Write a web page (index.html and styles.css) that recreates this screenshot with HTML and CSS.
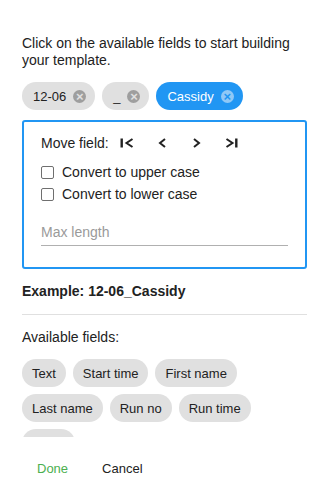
FILE: index.html
```html
<!DOCTYPE html>
<html lang="en">
<head>
    <meta charset="UTF-8">
    <meta name="viewport" content="width=device-width, initial-scale=1.0">
    <title>Template builder</title>
    <link rel="stylesheet" href="styles.css">
</head>
<body>
    <div class="dialog">
        <p class="intro">Click on the available fields to start building your template.</p>

        <div class="chips selected">
            <span class="chip">12-06 <span class="remove">&times;</span></span>
            <span class="chip">_ <span class="remove">&times;</span></span>
            <span class="chip active">Cassidy <span class="remove">&times;</span></span>
        </div>

        <div class="editor">
            <div class="move-row">
                <span>Move field:</span>
                <div class="move-buttons">
                    <button type="button" class="icon-btn" title="First">
                        <svg width="14" height="10" viewBox="0 0 14 10"><rect x="0.5" y="0.5" width="2.4" height="9" fill="#222"/><polyline points="12.5,1 6.5,5 12.5,9" fill="none" stroke="#222" stroke-width="2"/></svg>
                    </button>
                    <button type="button" class="icon-btn" title="Previous">
                        <svg width="8" height="10" viewBox="0 0 8 10"><polyline points="7,1 2,5 7,9" fill="none" stroke="#222" stroke-width="2"/></svg>
                    </button>
                    <button type="button" class="icon-btn" title="Next">
                        <svg width="8" height="10" viewBox="0 0 8 10"><polyline points="1,1 6,5 1,9" fill="none" stroke="#222" stroke-width="2"/></svg>
                    </button>
                    <button type="button" class="icon-btn" title="Last">
                        <svg width="14" height="10" viewBox="0 0 14 10"><polyline points="1.5,1 7.5,5 1.5,9" fill="none" stroke="#222" stroke-width="2"/><rect x="10.1" y="0.5" width="2.4" height="9" fill="#222"/></svg>
                    </button>
                </div>
            </div>
            <label class="check-row"><span class="check"></span>Convert to upper case</label>
            <label class="check-row"><span class="check"></span>Convert to lower case</label>
            <input class="max-length" type="text" placeholder="Max length">
        </div>

        <p class="example">Example: 12-06_Cassidy</p>
        <hr class="divider">
        <p class="label">Available fields:</p>

        <div class="field-list">
            <div class="chips">
                <span class="chip">Text</span>
                <span class="chip">Start time</span>
                <span class="chip">First name</span>
                <span class="chip">Last name</span>
                <span class="chip">Run no</span>
                <span class="chip">Run time</span>
                <span class="chip">Class</span>
            </div>
        </div>

        <div class="actions">
            <button type="button" class="text-btn done">Done</button>
            <button type="button" class="text-btn">Cancel</button>
        </div>
    </div>
</body>
</html>
```

FILE: styles.css
```css
body {
    margin: 0;
    background-color: #fff;
    font-family: "Liberation Sans", Arial, sans-serif;
    color: #222;
}
.dialog {
    width: 329px;
    height: 500px;
    box-sizing: border-box;
    padding: 35px 22px 0 22px;
    border-radius: 3px;
}
p {
    margin: 0;
}
.intro {
    font-size: 14px;
    line-height: 17px;
}
.chips {
    display: flex;
    flex-wrap: wrap;
    gap: 7px;
}
.selected {
    margin-top: 13px;
}
.chip {
    display: inline-flex;
    align-items: center;
    height: 28px;
    padding: 0 10px;
    border-radius: 14px;
    background-color: #e0e0e0;
    font-size: 13px;
    color: #222;
    box-sizing: border-box;
}
.selected .chip {
    padding: 0 9px 0 11px;
    gap: 7px;
}
.remove {
    display: inline-flex;
    align-items: center;
    justify-content: center;
    width: 13px;
    height: 13px;
    border-radius: 50%;
    background-color: #9e9e9e;
    color: #e0e0e0;
    font-size: 13px;
    font-weight: bold;
    line-height: 13px;
}
.chip.active {
    background-color: #2196f3;
    color: #fff;
}
.chip.active .remove {
    background-color: #90c8f6;
    color: #2196f3;
}
.editor {
    margin-top: 10px;
    border: 2px solid #2196f3;
    border-radius: 3px;
    padding: 9px 17px 21px 17px;
}
.move-row {
    display: flex;
    align-items: center;
    height: 24px;
    font-size: 14px;
    line-height: 24px;
}
.move-buttons {
    display: flex;
    margin-left: 1px;
}
.icon-btn {
    width: 35px;
    height: 24px;
    padding: 0;
    border: none;
    background: none;
    display: flex;
    align-items: center;
    justify-content: center;
    cursor: pointer;
}
.check-row {
    display: flex;
    align-items: center;
    height: 22px;
    font-size: 14px;
    line-height: 22px;
    gap: 8px;
}
.move-row + .check-row {
    margin-top: 6px;
}
.check {
    width: 13px;
    height: 13px;
    box-sizing: border-box;
    border: 1.5px solid #6f6f6f;
    border-radius: 2px;
    background-color: #fff;
}
.max-length {
    display: block;
    width: 100%;
    margin-top: 13px;
    padding: 4px 0 3px 0;
    border: none;
    border-bottom: 1px solid #b0b0b0;
    font-family: inherit;
    font-size: 14px;
    line-height: 20px;
    height: 28px;
    box-sizing: border-box;
    outline: none;
}
.max-length::placeholder {
    color: #9a9a9a;
}
.example {
    margin-top: 14px;
    font-size: 14px;
    line-height: 17px;
    font-weight: bold;
}
.divider {
    margin: 14px 0 0 0;
    border: none;
    border-top: 1px solid #e0e0e0;
}
.label {
    margin-top: 14px;
    font-size: 14px;
    line-height: 17px;
}
.field-list {
    margin-top: 13px;
    height: 78px;
    overflow: hidden;
}
.actions {
    display: flex;
    gap: 4px;
    margin-top: 13px;
}
.text-btn {
    height: 36px;
    padding: 0 15px;
    border: none;
    background: none;
    font-family: inherit;
    font-size: 13px;
    color: #222;
    cursor: pointer;
}
.text-btn.done {
    color: #4caf50;
}
```
